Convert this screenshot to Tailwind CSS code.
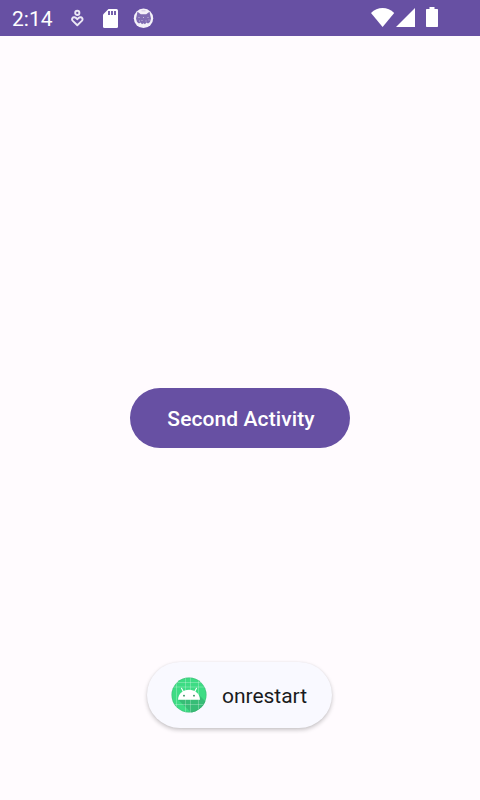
<!DOCTYPE html>
<html lang="en">
<head>
<meta charset="utf-8">
<title>Second Activity</title>
<script src="https://cdn.jsdelivr.net/npm/@tailwindcss/browser@4"></script>
</head>
<body class="bg-[#fffbfe] font-[Roboto,sans-serif]">
<div class="relative flex h-[800px] w-[480px] flex-col overflow-hidden bg-[#fffbfe]">
  <header class="flex h-9 shrink-0 items-center bg-[#6750a3] pl-3 pr-[41px] text-white">
    <span class="w-[58px] pt-0.5 text-[21px] leading-6">2:14</span>
    <svg class="h-9 w-[14px]" viewBox="0 0 14 36" fill="none" stroke="#ece8f4" stroke-width="1.9">
      <circle cx="7.3" cy="12.9" r="2.1"/>
      <path d="M7.3 25.2L2.800 20.900C1.100 19 2.700 17 4.500 17.300C5.800 17.500 6.500 18.200 7.300 19.300C8.100 18.200 8.800 17.500 10.100 17.300C11.900 17 13.500 19 11.800 20.900Z" stroke-linejoin="round"/>
    </svg>
    <svg class="ml-[19px] h-9 w-[15px]" viewBox="0 0 15 36">
      <path d="M5.5 9H13.5Q15 9 15 10.5V26.5Q15 28 13.5 28H1.5Q0 28 0 26.5V14.5Z" fill="#fff"/>
      <path d="M5.1 11h1.8v4H5.100zM8.100 11h1.800v4H8.100zM11.100 11h1.800v4h-1.800z" fill="#6750a3"/>
    </svg>
    <svg class="ml-[15px] h-9 w-[21px]" viewBox="0 0 21 36">
      <circle cx="10.500" cy="18.300" r="9.700" fill="#f4f1f9"/>
      <path d="M4.500 11.800L7.800 14.300H13.200L16.500 11.800L17.300 15.500L18 18.500L17 22L15 23.500L13.500 22.600L12 24.200L10.500 23.200L9 24.200L7.500 22.600L6 23.500L4 22L3 18.500L3.700 15.500Z" fill="#7f6bb2"/>
      <path d="M5.500 17.500h1M8.500 20.500h1M12.500 21h1M14.500 17.500h1M10 17.500h1M6 21h1M15.500 20h1" stroke="#c3b8db" stroke-width="1"/>
      <path d="M8.500 10.800H12.500" stroke="#c9bfe0" stroke-width=".8"/>
    </svg>
    <div class="ml-auto flex">
      <svg class="h-9 w-6" viewBox="0 0 24 36"><path d="M0 13C6.500 6.400 16.700 6.400 23.200 13L11.600 27Z" fill="#fff"/></svg>
      <svg class="ml-px h-9 w-5" viewBox="0 0 20 36"><path d="M0 27L19 8V27Z" fill="#fff"/></svg>
      <svg class="ml-[10px] h-9 w-[13px]" viewBox="0 0 13 36"><path d="M3.500 7H8.500V9H11.300Q12 9 12 9.700V26.300Q12 27 11.300 27H.7Q0 27 0 26.300V9.700Q0 9 .7 9H3.500Z" fill="#fff"/></svg>
    </div>
  </header>
  <main class="flex flex-1 justify-center pt-[352px]">
    <button class="h-[60px] w-[220px] rounded-full bg-[#6750a3] pl-0.5 pt-0.5 text-[21px] font-medium leading-6 tracking-[0.1px] text-white">Second Activity</button>
  </main>
  <div class="absolute left-[147px] top-[662px] flex h-[66px] w-[185px] items-center rounded-full bg-[#f9f9ff] pl-6 shadow-[0_2px_4px_rgba(0,0,0,0.22),0_0_2px_rgba(0,0,0,0.05)]">
    <svg class="h-9 w-9" viewBox="0 0 36 36">
      <defs><clipPath id="disc"><circle cx="18" cy="18" r="17.5"/></clipPath></defs>
      <g clip-path="url(#disc)">
        <path fill="#3ddc84" d="M0 0h36v36H0z"/>
        <path d="M7 22.500L20.500 36H36V26L28 18L29 22.500Z" fill="#37bd76"/>
        <path d="M5.500 0V36M14.500 0V36M19.500 0V36M27.500 0V36M0 5.500H36M0 10H36M0 27.500H36" stroke="#fff" stroke-opacity=".32" stroke-width=".8"/>
      </g>
      <circle cx="18" cy="18" r="17.200" fill="none" stroke="#555" stroke-opacity=".22" stroke-width=".6"/>
      <path d="M7 22.700C7.300 16.400 12 12.700 18 12.700S28.700 16.400 29 22.700Z" fill="#fff"/>
      <path d="M12.500 15L10.500 11.300M23.500 15L25.500 11.300" stroke="#fff" stroke-width="1.100" stroke-linecap="round"/>
      <circle cx="13" cy="18.700" r=".9" fill="#278e57"/><circle cx="23" cy="18.700" r=".9" fill="#278e57"/>
    </svg>
    <span class="ml-[15px] pt-0.5 text-[21px] leading-6 tracking-[-0.03px] text-[#1a1b20]">onrestart</span>
  </div>
</div>
</body>
</html>
